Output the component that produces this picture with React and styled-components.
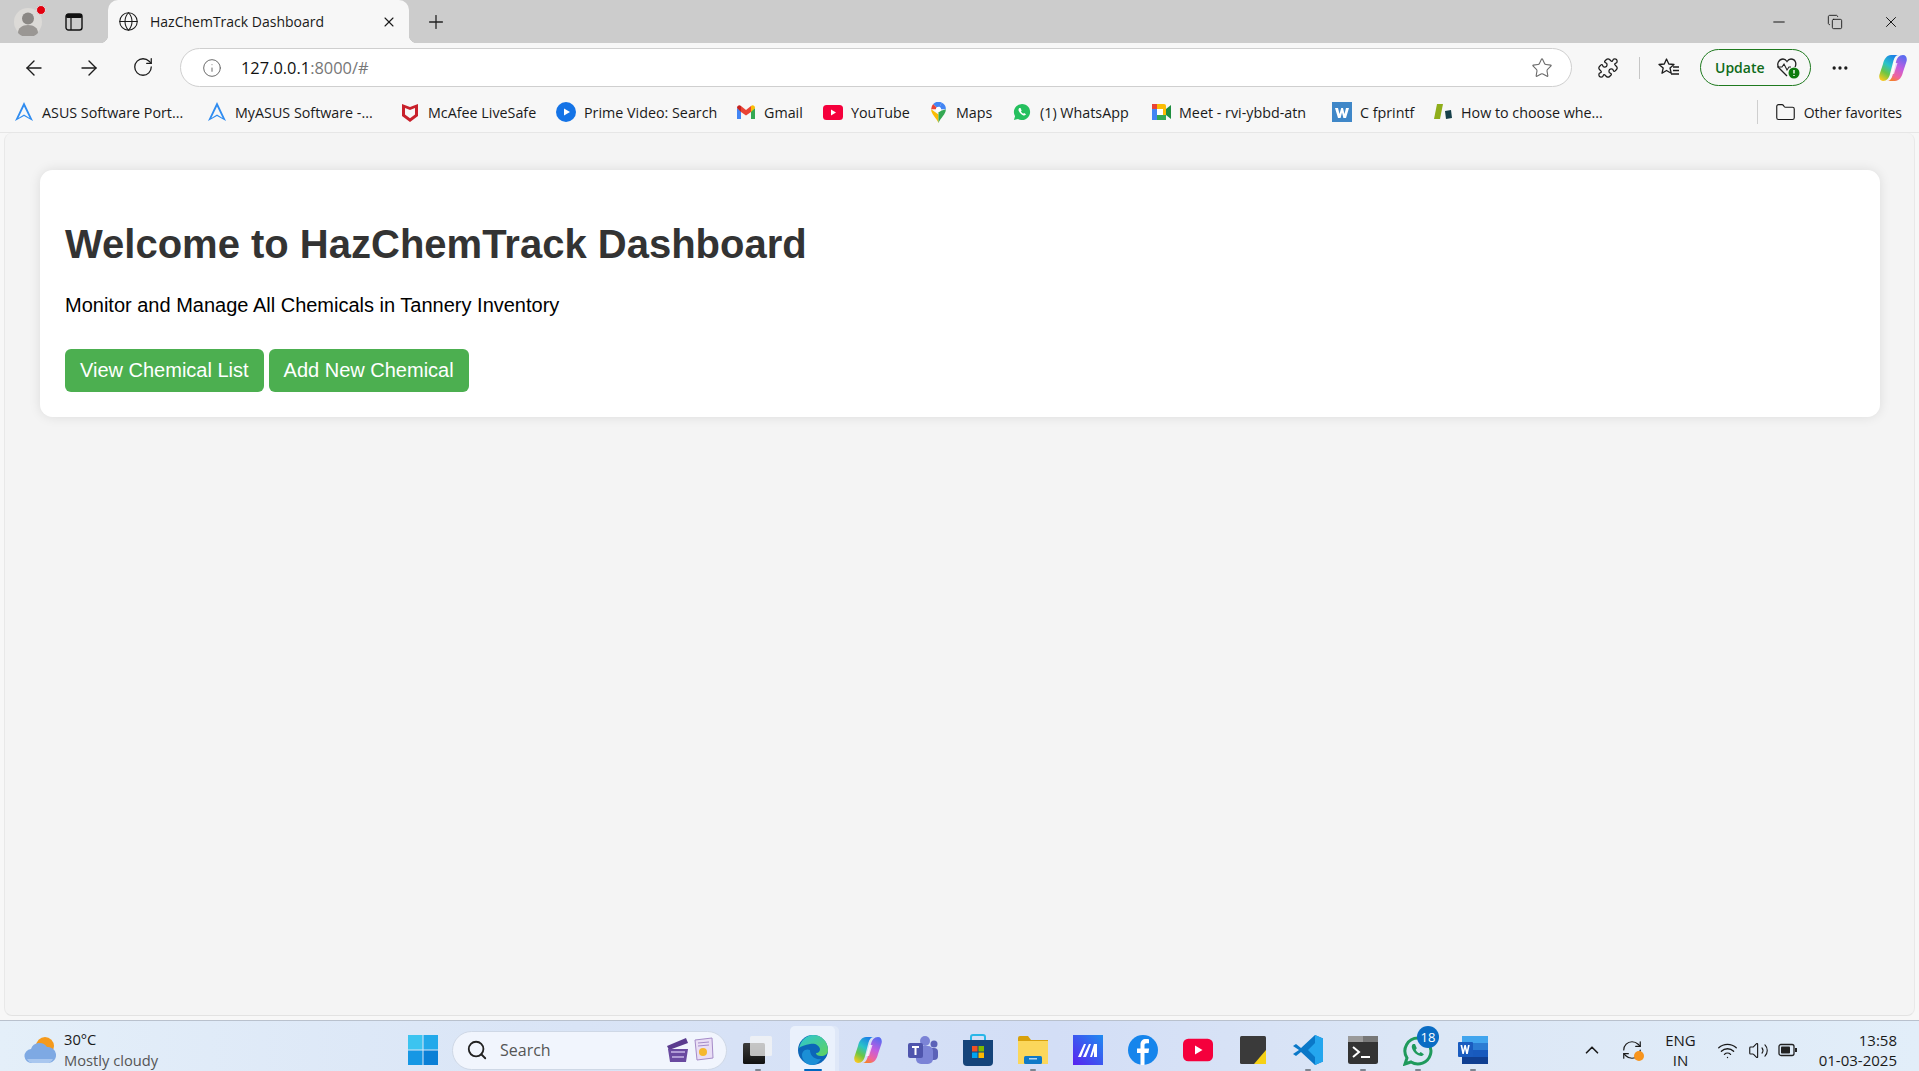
import React from "react";
import styled, { createGlobalStyle } from "styled-components";
import {
  ArrowLeft, ArrowRight, RotateCw, Info, Star, Puzzle, Ellipsis, Plus, X, Minus, Copy, Globe,
  Folder, Search, ChevronUp, Wifi, Volume2, RefreshCw,
} from "lucide-react";

const GlobalStyle = createGlobalStyle`
  html, body { margin: 0; padding: 0; height: 100%; overflow: hidden; }
  body { font-family: "Open Sans", "Noto Sans", sans-serif; background: #f7f7f7; }
  #root { height: 100%; }
`;

const Shell = styled.div`
  width: 1919px;
  height: 1071px;
  display: flex;
  flex-direction: column;
  background: #f7f7f7;
`;

/* browser chrome */
const TabStrip = styled.div`
  height: 43px;
  background: #cccccc;
  display: flex;
  align-items: center;
  flex-shrink: 0;
`;

const Avatar = styled.div`
  position: relative;
  width: 28px;
  height: 28px;
  margin-left: 14px;
  display: flex;
`;

const RedDot = styled.span`
  position: absolute;
  top: -3px;
  right: -4px;
  width: 8px;
  height: 8px;
  border-radius: 50%;
  background: #e3000f;
  border: 1px solid #ddd;
`;

const SideIcon = styled.div`
  margin-left: 23px;
  width: 20px;
  display: flex;
`;

const Tab = styled.div`
  position: relative;
  margin-left: 23px;
  width: 301px;
  height: 43px;
  background: #f7f7f7;
  border-radius: 10px 10px 0 0;
  display: flex;
  align-items: center;
  padding: 0 12px 0 10px;
  box-sizing: border-box;
  color: #1a1a1a;

  &::before,
  &::after {
    content: "";
    position: absolute;
    bottom: 0;
    width: 8px;
    height: 8px;
  }
  &::before {
    left: -8px;
    background: radial-gradient(circle at 0 0, transparent 8px, #f7f7f7 8.5px);
  }
  &::after {
    right: -8px;
    background: radial-gradient(circle at 100% 0, transparent 8px, #f7f7f7 8.5px);
  }
`;

const TabTitle = styled.span`
  margin-left: 11px;
  font-size: 14px;
  flex: 1;
  white-space: nowrap;
`;

const NewTab = styled.div`
  margin-left: 16px;
  display: flex;
  color: #222;
`;

const WindowButtons = styled.div`
  margin-left: auto;
  display: flex;
  align-items: center;
  gap: 39px;
  padding-right: 19px;
  color: #111;
`;

const Toolbar = styled.div`
  height: 49px;
  display: flex;
  align-items: center;
  flex-shrink: 0;
  color: #1c1c1c;
`;

const NavButtons = styled.div`
  display: flex;
  gap: 31px;
  margin-left: 22px;
  padding-right: 1px;
`;

const AddressBar = styled.div`
  margin-left: 25px;
  width: 1392px;
  height: 39px;
  box-sizing: border-box;
  background: #fff;
  border: 1px solid #cfcfcf;
  border-radius: 20px;
  display: flex;
  align-items: center;
  padding: 0 18px 0 21px;
  color: #6b6b6b;
`;

const Url = styled.span`
  margin-left: 19px;
  font-size: 16.4px;
  color: #777;
  flex: 1;
  b { font-weight: 400; color: #111; }
`;

const ToolIcon = styled.div`
  display: flex;
  margin-left: ${(p) => p.$ml}px;
`;

const Divider = styled.div`
  width: 1px;
  height: 22px;
  background: #c6c6c6;
  margin-left: ${(p) => p.$ml}px;
`;

const UpdatePill = styled.div`
  margin-left: 20px;
  width: 111px;
  height: 37px;
  box-sizing: border-box;
  border: 1.5px solid #1f7a1f;
  border-radius: 19px;
  display: flex;
  align-items: center;
  padding-left: 14px;
  color: #0f6b1a;
  font-size: 14px;
  font-weight: 600;
  gap: 11px;
`;

const Bookmarks = styled.div`
  height: 41px;
  display: flex;
  align-items: center;
  flex-shrink: 0;
  padding-left: 14px;
  border-bottom: 1px solid #e6e6e6;
  box-sizing: border-box;
  font-size: 14.3px;
  color: #1a1a1a;
`;

const Bookmark = styled.div`
  width: ${(p) => p.$w}px;
  flex-shrink: 0;
  display: flex;
  align-items: center;
  gap: 8px;
  white-space: nowrap;
`;

const BookmarkIcon = styled.span`
  width: 20px;
  height: 22px;
  display: flex;
  align-items: center;
  justify-content: center;
`;

const OtherFavorites = styled.div`
  margin-left: auto;
  display: flex;
  align-items: center;
  gap: 8px;
  padding-right: 17px;
  height: 24px;
  border-left: 1px solid #cfcfcf;
  padding-left: 17px;
  white-space: nowrap;
  font-size: 14px;
`;

/* page */
const Viewport = styled.main`
  flex: 1;
  margin: 0 0 4px 4px;
  padding: 37px 34px 0 35px;
  width: 1911px;
  box-sizing: border-box;
  background: #f4f4f4;
  border-left: 1px solid #e8e8e8;
  border-right: 1px solid #e8e8e8;
  border-bottom: 1px solid #e2e2e2;
  border-radius: 8px;
`;

const Card = styled.section`
  height: 247px;
  box-sizing: border-box;
  padding: 25px;
  background: #fff;
  border-radius: 12.5px;
  box-shadow: 0 0 12px rgba(0, 0, 0, 0.1);
  font-family: "Liberation Sans", Arial, sans-serif;
`;

const Heading = styled.h1`
  margin: 26px 0 0;
  font-size: 40px;
  line-height: 46px;
  font-weight: 700;
  color: #333;
`;

const Lead = styled.p`
  margin: 27px 0 0;
  font-size: 20px;
  line-height: 23px;
  color: #000;
`;

const ButtonRow = styled.div`
  margin-top: 32px;
  display: flex;
  gap: 5px;
`;

const ActionButton = styled.a`
  padding: 10px 15px;
  height: 43px;
  box-sizing: border-box;
  background: #4caf50;
  color: #fff;
  font-size: 20px;
  line-height: 23px;
  border-radius: 6px;
  white-space: nowrap;
`;

/* taskbar */
const Taskbar = styled.footer`
  height: 51px;
  flex-shrink: 0;
  box-sizing: border-box;
  padding-top: 8px;
  border-top: 1px solid #b9c1cd;
  background: linear-gradient(90deg, #e4eff9 0%, #d9e4f6 30%, #d3def6 55%, #dce7f6 75%, #e2eef9 100%);
  display: flex;
  align-items: center;
  font-size: 14px;
  color: #1a1a1a;
`;

const Weather = styled.div`
  width: 408px;
  padding-left: 24px;
  box-sizing: border-box;
  display: flex;
  align-items: center;
  gap: 8px;
  flex-shrink: 0;
`;

const WeatherText = styled.div`
  line-height: 21px;
  font-size: 14.7px;
  span { display: block; color: #555; }
`;

const SearchBox = styled.div`
  margin-left: 14px;
  width: 275px;
  height: 39px;
  box-sizing: border-box;
  background: #f1f5fd;
  border: 1px solid #cfd8e6;
  border-radius: 20px;
  display: flex;
  align-items: center;
  padding: 0 12px 0 13px;
  font-size: 16px;
  color: #555;
  gap: 12px;
`;

const SearchWidgets = styled.div`
  margin-left: auto;
  display: flex;
  gap: 4px;
`;

const TaskIcons = styled.div`
  align-self: flex-end;
  margin-left: 8px;
  display: flex;
`;

const TaskSlot = styled.div`
  position: relative;
  width: 45px;
  height: 45px;
  box-sizing: border-box;
  padding-top: 3px;
  margin-right: 10px;
  display: flex;
  align-items: center;
  justify-content: center;
  border-radius: 5px 5px 0 0;
  background: ${(p) => (p.$active ? "#eaf1fc" : "transparent")};
  box-shadow: ${(p) => (p.$active ? "4px 0 0 #dfe8f8" : "none")};
`;

const RunMark = styled.span`
  position: absolute;
  bottom: 0;
  left: 50%;
  transform: translateX(-50%);
  height: 2px;
  width: ${(p) => (p.$active ? 18 : 6)}px;
  border-radius: 1px;
  background: ${(p) => (p.$active ? "#0067c0" : "#7d8590")};
`;

const Badge = styled.span`
  position: absolute;
  top: 0;
  right: 1px;
  width: 22px;
  height: 22px;
  border-radius: 50%;
  background: #0a6cc4;
  color: #fff;
  font-size: 13px;
  display: flex;
  align-items: center;
  justify-content: center;
`;

const Tray = styled.div`
  margin-left: auto;
  display: flex;
  align-items: center;
  color: #1a1a1a;
`;

const TrayIcon = styled.div`
  position: relative;
  display: flex;
  margin-left: ${(p) => p.$ml}px;
`;

const SyncDot = styled.span`
  position: absolute;
  right: -1px;
  bottom: 0;
  width: 10px;
  height: 10px;
  border-radius: 50%;
  background: #f7941d;
`;

const Lang = styled.div`
  margin-left: 22px;
  text-align: center;
  line-height: 20px;
  font-size: 15px;
`;

const Clock = styled.div`
  margin-left: 21px;
  padding-right: 22px;
  text-align: right;
  line-height: 20px;
  font-size: 15px;
`;

/* drawn icons */
const AvatarIcon = () => (
  <svg width="28" height="28" viewBox="0 0 28 28">
    <circle cx="14" cy="14" r="14" fill="#dcdad7" />
    <circle cx="14" cy="10.500" r="6" fill="#8b8885" />
    <path d="M4 25c0-5 4-8 10-8s10 3 10 8a14 14 0 0 1-20 0Z" fill="#9a9794" />
  </svg>
);

const SidebarIcon = () => (
  <svg width="18" height="18" viewBox="0 0 18 18">
    <rect x="1" y="1" width="16" height="16" rx="2.500" fill="none" stroke="#111" strokeWidth="1.400" />
    <rect x="1" y="1" width="16" height="4" rx="1.500" fill="#111" />
    <path d="M6 5v12" stroke="#111" strokeWidth="1.200" />
  </svg>
);

const AsusIcon = () => (
  <svg width="20" height="22" viewBox="0 0 20 22">
    <path d="M10 1 1 20l9-5 9 5L10 1Zm0 4.500 5.600 11.400L10 13.500l-5.600 3.400L10 5.500Z" fill="#2f8cf0" />
  </svg>
);

const McAfeeIcon = () => (
  <svg width="18" height="20" viewBox="0 0 18 20">
    <path d="M1 2 9 5l8-3v12l-8 6-8-6V2Zm3 4v6.500l5 3.700 5-3.700V6L9 8 4 6Z" fill="#c8202b" />
  </svg>
);

const PrimeIcon = () => (
  <svg width="20" height="20" viewBox="0 0 20 20">
    <circle cx="10" cy="10" r="10" fill="#1473e6" />
    <path d="M8 6.500 14 10l-6 3.500v-7Z" fill="#fff" />
  </svg>
);

const GmailIcon = () => (
  <svg width="18" height="14" viewBox="0 0 18 14">
    <path d="M0 3v11h4V6Z" fill="#4285f4" />
    <path d="M18 3v11h-4V6Z" fill="#34a853" />
    <path d="M4 7V1L9 5l5-4v6L9 10.500Z" fill="#ea4335" />
    <path d="M0 3c0-2.500 2.500-3.500 4-2v6Z" fill="#c5221f" />
    <path d="M18 3c0-2.500-2.500-3.500-4-2v6Z" fill="#fbbc04" />
  </svg>
);

const YoutubeIcon = ({ w = 20, h = 15 }) => (
  <svg width={w} height={h} viewBox="0 0 20 15">
    <rect width="20" height="15" rx="3.500" fill="#f5003c" />
    <path d="M8 4.500 13 7.500 8 10.500Z" fill="#fff" />
  </svg>
);

const MapsIcon = () => (
  <svg width="15" height="21" viewBox="0 0 14 20">
    <path d="M7 20C5 15 0 12 0 7l7 5Z" fill="#fbbc04" />
    <path d="M7 20c2-5 7-8 7-13L7 9Z" fill="#34a853" />
    <path d="M2 2 7 7H0a7 7 0 0 1 2-5Z" fill="#ea4335" />
    <path d="M2 2a7 7 0 0 1 8-1.500L7 7Z" fill="#4285f4" />
    <path d="M10 .5A7 7 0 0 1 14 7H7Z" fill="#4285f4" />
    <circle cx="7" cy="7" r="2.500" fill="#fff" />
  </svg>
);

const WhatsIcon = ({ size = 18 }) => (
  <svg width={size} height={size} viewBox="0 0 20 20">
    <path d="M10 1a9 9 0 0 0-7.700 13.600L1 19l4.500-1.200A9 9 0 1 0 10 1Z" fill="#25c05e" />
    <path d="M7 5.500c-1 .8-1.200 2.200-.4 3.800 1 2 2.500 3.500 4.500 4.300 1.500.6 2.800.2 3.400-1l-2.200-1.500-1 .9c-1-.5-1.900-1.400-2.500-2.500l.8-1L8.400 5.500Z" fill="#fff" />
  </svg>
);

const MeetIcon = () => (
  <svg width="19" height="16" viewBox="0 0 19 16">
    <rect x="0" y="0" width="14" height="16" rx="2" fill="#fbbc04" />
    <rect x="0" y="5" width="5" height="11" fill="#4285f4" />
    <rect x="5" y="11" width="9" height="5" fill="#34a853" />
    <rect x="0" y="0" width="5" height="5" fill="#ea4335" />
    <rect x="5" y="5" width="6" height="6" fill="#fff" />
    <path d="M14 5l5-4v14l-5-4Z" fill="#1e8e3e" />
  </svg>
);

const WIcon = () => (
  <svg width="20" height="20" viewBox="0 0 20 20">
    <rect width="20" height="20" fill="#3f87c8" />
    <path d="M3 6h3l1.500 6L9.200 6h1.800l1.500 6L14 6h3l-3 10h-2.600L10 10.500 8.600 16H6Z" fill="#fff" />
  </svg>
);

const SlabIcon = () => (
  <svg width="20" height="18" viewBox="0 0 20 18">
    <path d="M4 1h6L7 16H1Z" fill="#8fae1b" />
    <path d="M12 8l6-1 1 8-6 1Z" fill="#17404a" />
  </svg>
);

const CopilotIcon = ({ size = 28, id = "cp" }) => (
  <svg width={size} height={size} viewBox="0 0 28 28">
    <defs>
      <linearGradient id={`${id}1`} x1="0.7" y1="0" x2="0.2" y2="1">
        <stop offset="0" stopColor="#1a7fe8" />
        <stop offset="0.4" stopColor="#29c3c9" />
        <stop offset="0.7" stopColor="#6cc644" />
        <stop offset="1" stopColor="#f8c81e" />
      </linearGradient>
      <linearGradient id={`${id}2`} x1="0.7" y1="0" x2="0.3" y2="1">
        <stop offset="0" stopColor="#5a6cf0" />
        <stop offset="0.45" stopColor="#c25ce0" />
        <stop offset="0.8" stopColor="#f0649a" />
        <stop offset="1" stopColor="#f5812e" />
      </linearGradient>
    </defs>
    <path d="M12 1h8c-3 0-4.500 2-5.500 5.500L11 20c-1 4-3 7-7 7-3 0-4.500-3-3.500-6.500L4 10c1-5 4-9 8-9Z" fill={`url(#${id}1)`} />
    <path d="M16 27H8c3 0 4.500-2 5.500-5.500L17 8c1-4 3-7 7-7 3 0 4.500 3 3.500 6.500L24 18c-1 5-4 9-8 9Z" fill={`url(#${id}2)`} />
    <path d="M15.500 9h3l-3.500 11h-3Z" fill="#fff" opacity="0.75" />
  </svg>
);

const CloudIcon = () => (
  <svg width="32" height="28" viewBox="0 0 32 28">
    <circle cx="21" cy="10" r="9" fill="#f59a1c" />
    <path d="M8 27a7 7 0 0 1-1-14 9 9 0 0 1 16-2 7 7 0 0 1 2 16Z" fill="#7ea9e3" />
    <path d="M8 27a7 7 0 0 1-5-4h26a7 7 0 0 1-4 4Z" fill="#a9c7ef" />
  </svg>
);

const WindowsIcon = () => (
  <svg width="30" height="30" viewBox="0 0 30 30">
    <rect x="0" y="0" width="14.500" height="14.500" fill="#3cc4f0" />
    <rect x="15.500" y="0" width="14.500" height="14.500" fill="#22a9ea" />
    <rect x="0" y="15.500" width="14.500" height="14.500" fill="#1697e4" />
    <rect x="15.500" y="15.500" width="14.500" height="14.500" fill="#0a7fd6" />
  </svg>
);

const ClapperIcon = () => (
  <svg width="24" height="26" viewBox="0 0 24 26">
    <path d="M1 9 20 1l2 5L3 13Z" fill="#5b3c8f" />
    <path d="M2 12h20l-2 13H4Z" fill="#6a4aa0" />
    <path d="M5 15h14M6 20h12" stroke="#c8b6e6" strokeWidth="1.500" />
  </svg>
);

const NewsIcon = () => (
  <svg width="20" height="24" viewBox="0 0 20 24">
    <path d="M1 3 18 1l1 20-16 2Z" fill="#e9def5" stroke="#a58bc8" />
    <path d="M4 6l11-1M4 9l11-1" stroke="#a58bc8" />
    <circle cx="9" cy="15" r="4" fill="#f5b82e" />
  </svg>
);

const ExplorerIcon = () => (
  <svg width="29" height="28" viewBox="0 0 29 28">
    <defs>
      <linearGradient id="ex" x1="0" y1="0" x2="0" y2="1">
        <stop offset="0" stopColor="#3c3c3c" />
        <stop offset="1" stopColor="#111" />
      </linearGradient>
    </defs>
    <rect x="0" y="7" width="22" height="21" rx="1.500" fill="url(#ex)" />
    <rect x="7" y="0" width="22" height="20" rx="1.500" fill="#f4f4f4" opacity="0.75" />
  </svg>
);

const EdgeIcon = () => (
  <svg width="30" height="30" viewBox="0 0 30 30">
    <defs>
      <linearGradient id="eg" x1="0" y1="0" x2="1" y2="1">
        <stop offset="0" stopColor="#2cc5d8" />
        <stop offset="1" stopColor="#5fd35b" />
      </linearGradient>
    </defs>
    <circle cx="15" cy="15" r="15" fill="#0c66b8" />
    <path d="M1 13C3 5 9 0 15 0c8 0 15 6 15 15 0 4-3 6-7 6-3 0-5-1-5-3 3 0 4-2 4-4-1-4-5-6-10-5-5 1-9 2-11 4Z" fill="url(#eg)" />
    <path d="M12 15c0 5 4 10 11 9-2 3-5 6-9 6-6 0-10-5-10-10 0-3 3-7 8-5Z" fill="#1b8fd6" />
  </svg>
);

const TeamsIcon = () => (
  <svg width="30" height="30" viewBox="0 0 30 30">
    <circle cx="17" cy="6" r="5" fill="#7b83d6" />
    <circle cx="26" cy="9" r="3.500" fill="#5b62b8" />
    <rect x="20" y="13" width="10" height="12" rx="4" fill="#5b62b8" />
    <rect x="8" y="11" width="17" height="18" rx="5" fill="#7b83d6" />
    <rect x="0" y="8" width="15" height="15" rx="2" fill="#4f55ad" />
    <path d="M4 11h7v2H8.500v7h-2v-7H4Z" fill="#fff" />
  </svg>
);

const StoreIcon = () => (
  <svg width="30" height="32" viewBox="0 0 30 32">
    <path d="M8 7V3a2 2 0 0 1 2-2h10a2 2 0 0 1 2 2v4" fill="none" stroke="#29b6e8" strokeWidth="2" />
    <path d="M0 6h30v22a4 4 0 0 1-4 4H4a4 4 0 0 1-4-4Z" fill="#15447a" />
    <rect x="9" y="12" width="5.500" height="5.500" fill="#f25022" />
    <rect x="15.500" y="12" width="5.500" height="5.500" fill="#7fba00" />
    <rect x="9" y="18.500" width="5.500" height="5.500" fill="#00a4ef" />
    <rect x="15.500" y="18.500" width="5.500" height="5.500" fill="#ffb900" />
  </svg>
);

const FolderIcon = () => (
  <svg width="30" height="28" viewBox="0 0 30 28">
    <path d="M0 2a2 2 0 0 1 2-2h8l3 4h17v4H0Z" fill="#d8a10c" />
    <path d="M0 5h30v23H0Z" fill="#fbd75b" />
    <rect x="6" y="20" width="18" height="8" rx="1.500" fill="#0f79c7" />
    <rect x="11" y="22" width="8" height="1.500" fill="#fff" opacity="0.7" />
  </svg>
);

const MaIcon = () => (
  <svg width="30" height="30" viewBox="0 0 30 30">
    <defs>
      <linearGradient id="ma" x1="0" y1="1" x2="1" y2="0">
        <stop offset="0" stopColor="#5a22f0" />
        <stop offset="1" stopColor="#1f8cf0" />
      </linearGradient>
    </defs>
    <rect width="30" height="30" fill="url(#ma)" />
    <path d="M5 22 11 9h2L8 22ZM10 22l6-13h2l-5 13ZM17 22l4-13h3v13h-3v-6l-2 6Z" fill="#fff" />
  </svg>
);

const FacebookIcon = () => (
  <svg width="30" height="30" viewBox="0 0 30 30">
    <circle cx="15" cy="15" r="15" fill="#1685ec" />
    <path d="M16.500 30V18h4l.6-4.500h-4.600v-3c0-1.300.5-2.200 2.300-2.200H21V4.300c-.6-.1-1.800-.3-3.200-.3-3.200 0-5.300 2-5.300 5.500v4H9V18h3.500v12Z" fill="#fff" />
  </svg>
);

const NotesIcon = () => (
  <svg width="26" height="28" viewBox="0 0 26 28">
    <rect width="26" height="28" rx="1.500" fill="#3a3a3a" />
    <path d="M26 14v14H14Z" fill="#f6d115" />
  </svg>
);

const VscodeIcon = () => (
  <svg width="30" height="30" viewBox="0 0 30 30">
    <path d="M22 0 30 3.500v23L22 30 8 17l-5 4-3-2 6-4-6-4 3-2 5 4Z" fill="#0a78c8" />
    <path d="M22 0 30 3.500v23L22 30Zm0 8-7 7 7 7Z" fill="#24a6ee" />
  </svg>
);

const TerminalIcon = () => (
  <svg width="30" height="28" viewBox="0 0 30 28">
    <rect width="30" height="28" rx="2.500" fill="#333" />
    <rect width="30" height="6" fill="#9a9a9a" />
    <rect x="15" width="15" height="6" fill="#777" />
    <path d="M5 11l6 5-6 5" fill="none" stroke="#fff" strokeWidth="2" />
    <rect x="13" y="20" width="9" height="2" fill="#fff" />
  </svg>
);

const WhatsOutlineIcon = () => (
  <svg width="30" height="32" viewBox="0 0 30 32">
    <path d="M15 4A13 13 0 0 0 4 24L2 30l6-2a13 13 0 1 0 7-24Z" fill="none" stroke="#1f9a5c" strokeWidth="3" />
    <path d="M10 10c-1.500 1.200-1.600 3.200-.5 5.500 1.400 2.800 3.600 5 6.500 6.100 2.200.9 4 .3 4.900-1.400l-3.200-2.200-1.400 1.300c-1.500-.7-2.800-2-3.600-3.600l1.100-1.500L12 10Z" fill="#1f9a5c" />
  </svg>
);

const WordIcon = () => (
  <svg width="30" height="28" viewBox="0 0 30 28">
    <rect x="4" y="0" width="26" height="7" fill="#41a5ee" />
    <rect x="4" y="7" width="26" height="7" fill="#2b7cd3" />
    <rect x="4" y="14" width="26" height="7" fill="#185abd" />
    <rect x="4" y="21" width="26" height="7" fill="#103f91" />
    <rect x="0" y="6" width="15" height="15" rx="1" fill="#1a5cbf" />
    <path d="M2.500 9h1.700l1 5 1.200-5h1.400l1.200 5 1-5h1.700l-1.900 9H8.200L7 12.800 5.800 18H4.400Z" fill="#fff" />
  </svg>
);

const BatteryIcon = () => (
  <svg width="20" height="14" viewBox="0 0 20 14">
    <rect x="1" y="1.500" width="15" height="11" rx="2" fill="none" stroke="#222" strokeWidth="1.300" />
    <rect x="3" y="3.500" width="9" height="7" rx="0.800" fill="#222" />
    <rect x="17" y="5" width="2" height="4" fill="#222" />
  </svg>
);

const HeartAlertIcon = () => (
  <svg width="24" height="22" viewBox="0 0 24 22">
    <path d="M11 19 3 11C0 7 3 2 7 2c2 0 3 1 4 2.500C12 3 13 2 15 2c4 0 6 4 4 8" fill="none" stroke="#222" strokeWidth="1.300" />
    <path d="M1 10h5l2-3 3 6 2-3h2" fill="none" stroke="#222" strokeWidth="1.100" />
    <circle cx="18" cy="16" r="5.500" fill="#0f7b0f" />
    <path d="M18 13v3.500M18 18v1" stroke="#fff" strokeWidth="1.400" />
  </svg>
);

const FavoritesIcon = () => (
  <svg width="22" height="22" viewBox="0 0 22 22">
    <path d="M8.500 2 10.800 7l5.200.5-4 3.500 1.200 5.200L8.500 13.500 4 16.200 5.200 11 1 7.500 6.300 7Z" fill="none" stroke="#1c1c1c" strokeWidth="1.300" strokeLinejoin="round" />
    <path d="M15 10h6M15 13.500h6M13 17h8" stroke="#1c1c1c" strokeWidth="1.300" />
  </svg>
);

const bookmarks = [
  { w: 193, icon: <AsusIcon />, label: "ASUS Software Port..." },
  { w: 193, icon: <AsusIcon />, label: "MyASUS Software -..." },
  { w: 156, icon: <McAfeeIcon />, label: "McAfee LiveSafe" },
  { w: 180, icon: <PrimeIcon />, label: "Prime Video: Search" },
  { w: 87, icon: <GmailIcon />, label: "Gmail" },
  { w: 105, icon: <YoutubeIcon />, label: "YouTube" },
  { w: 84, icon: <MapsIcon />, label: "Maps" },
  { w: 139, icon: <WhatsIcon />, label: "(1) WhatsApp" },
  { w: 181, icon: <MeetIcon />, label: "Meet - rvi-ybbd-atn" },
  { w: 101, icon: <WIcon />, label: "C fprintf" },
  { w: 200, icon: <SlabIcon />, label: "How to choose whe..." },
];

const taskApps = [
  { icon: <ExplorerIcon />, running: true },
  { icon: <EdgeIcon />, active: true },
  { icon: <CopilotIcon id="cpt" /> },
  { icon: <TeamsIcon /> },
  { icon: <StoreIcon /> },
  { icon: <FolderIcon />, running: true },
  { icon: <MaIcon /> },
  { icon: <FacebookIcon /> },
  { icon: <YoutubeIcon w={30} h={24} /> },
  { icon: <NotesIcon /> },
  { icon: <VscodeIcon />, running: true },
  { icon: <TerminalIcon />, running: true },
  { icon: <WhatsOutlineIcon />, running: true, badge: "18" },
  { icon: <WordIcon />, running: true },
];

const App = () => {
  return (
    <Shell>
      <GlobalStyle />
      <TabStrip>
        <Avatar>
          <AvatarIcon />
          <RedDot />
        </Avatar>
        <SideIcon><SidebarIcon /></SideIcon>
        <Tab>
          <Globe size={21} strokeWidth={1.2} />
          <TabTitle>HazChemTrack Dashboard</TabTitle>
          <X size={16} strokeWidth={1.6} />
        </Tab>
        <NewTab><Plus size={22} strokeWidth={1.4} /></NewTab>
        <WindowButtons>
          <Minus size={18} strokeWidth={1.3} />
          <Copy size={16} strokeWidth={1.3} />
          <X size={18} strokeWidth={1.3} />
        </WindowButtons>
      </TabStrip>

      <Toolbar>
        <NavButtons>
          <ArrowLeft size={24} strokeWidth={1.4} />
          <ArrowRight size={24} strokeWidth={1.4} />
          <RotateCw size={22} strokeWidth={1.4} />
        </NavButtons>
        <AddressBar>
          <Info size={20} strokeWidth={1.2} />
          <Url><b>127.0.0.1</b>:8000/#</Url>
          <Star size={22} strokeWidth={1.2} />
        </AddressBar>
        <ToolIcon $ml={25}><Puzzle size={22} strokeWidth={1.4} /></ToolIcon>
        <Divider $ml={20} />
        <ToolIcon $ml={18}><FavoritesIcon /></ToolIcon>
        <UpdatePill>
          Update
          <HeartAlertIcon />
        </UpdatePill>
        <ToolIcon $ml={19}><Ellipsis size={20} strokeWidth={2} /></ToolIcon>
        <ToolIcon $ml={29}><CopilotIcon /></ToolIcon>
      </Toolbar>

      <Bookmarks>
        {bookmarks.map((b) => (
          <Bookmark key={b.label} $w={b.w}>
            <BookmarkIcon>{b.icon}</BookmarkIcon>
            {b.label}
          </Bookmark>
        ))}
        <OtherFavorites>
          <Folder size={21} strokeWidth={1.3} />
          Other favorites
        </OtherFavorites>
      </Bookmarks>

      <Viewport>
        <Card>
          <Heading>Welcome to HazChemTrack Dashboard</Heading>
          <Lead>Monitor and Manage All Chemicals in Tannery Inventory</Lead>
          <ButtonRow>
            <ActionButton>View Chemical List</ActionButton>
            <ActionButton>Add New Chemical</ActionButton>
          </ButtonRow>
        </Card>
      </Viewport>

      <Taskbar>
        <Weather>
          <CloudIcon />
          <WeatherText>
            30°C
            <span>Mostly cloudy</span>
          </WeatherText>
        </Weather>
        <WindowsIcon />
        <SearchBox>
          <Search size={22} strokeWidth={2} color="#222" />
          Search
          <SearchWidgets>
            <ClapperIcon />
            <NewsIcon />
          </SearchWidgets>
        </SearchBox>
        <TaskIcons>
          {taskApps.map((app, i) => (
            <TaskSlot key={i} $active={app.active}>
              {app.icon}
              {app.badge && <Badge>{app.badge}</Badge>}
              {(app.running || app.active) && <RunMark $active={app.active} />}
            </TaskSlot>
          ))}
        </TaskIcons>
        <Tray>
          <TrayIcon $ml={0}><ChevronUp size={22} strokeWidth={1.8} /></TrayIcon>
          <TrayIcon $ml={18}>
            <RefreshCw size={22} strokeWidth={1.3} />
            <SyncDot />
          </TrayIcon>
          <Lang>ENG<br />IN</Lang>
          <TrayIcon $ml={21}><Wifi size={21} strokeWidth={1.5} /></TrayIcon>
          <TrayIcon $ml={10}><Volume2 size={21} strokeWidth={1.3} /></TrayIcon>
          <TrayIcon $ml={9}><BatteryIcon /></TrayIcon>
          <Clock>13:58<br />01-03-2025</Clock>
        </Tray>
      </Taskbar>
    </Shell>
  );
};

export default App;
